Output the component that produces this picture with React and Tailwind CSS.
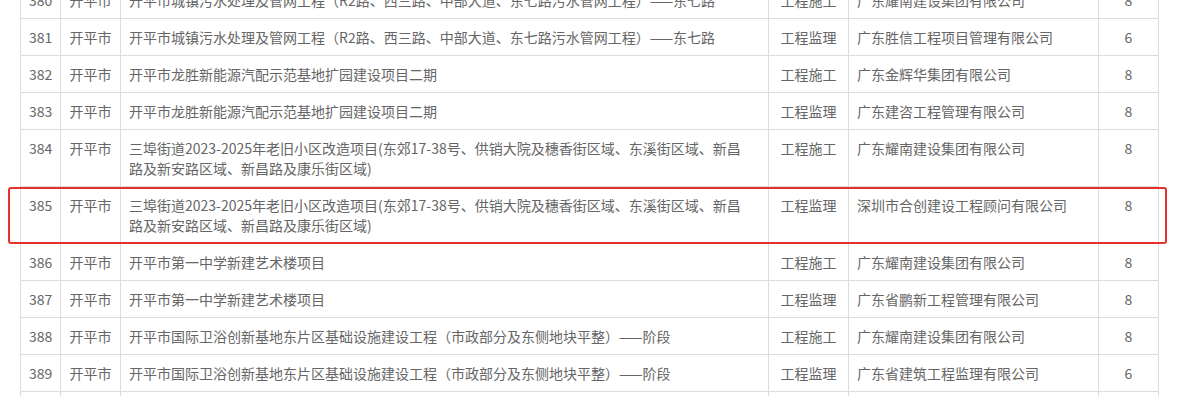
const rows = [
  {
    no: 380,
    city: "开平市",
    name: ["开平市城镇污水处理及管网工程（R2路、西三路、中部大道、东七路污水管网工程）——东七路"],
    type: "工程施工",
    company: "广东耀南建设集团有限公司",
    score: 8,
  },
  {
    no: 381,
    city: "开平市",
    name: ["开平市城镇污水处理及管网工程（R2路、西三路、中部大道、东七路污水管网工程）——东七路"],
    type: "工程监理",
    company: "广东胜信工程项目管理有限公司",
    score: 6,
  },
  {
    no: 382,
    city: "开平市",
    name: ["开平市龙胜新能源汽配示范基地扩园建设项目二期"],
    type: "工程施工",
    company: "广东金辉华集团有限公司",
    score: 8,
  },
  {
    no: 383,
    city: "开平市",
    name: ["开平市龙胜新能源汽配示范基地扩园建设项目二期"],
    type: "工程监理",
    company: "广东建咨工程管理有限公司",
    score: 8,
  },
  {
    no: 384,
    city: "开平市",
    name: [
      "三埠街道2023-2025年老旧小区改造项目(东郊17-38号、供销大院及穗香街区域、东溪街区域、新昌",
      "路及新安路区域、新昌路及康乐街区域)",
    ],
    type: "工程施工",
    company: "广东耀南建设集团有限公司",
    score: 8,
  },
  {
    no: 385,
    city: "开平市",
    name: [
      "三埠街道2023-2025年老旧小区改造项目(东郊17-38号、供销大院及穗香街区域、东溪街区域、新昌",
      "路及新安路区域、新昌路及康乐街区域)",
    ],
    type: "工程监理",
    company: "深圳市合创建设工程顾问有限公司",
    score: 8,
    marked: true,
  },
  {
    no: 386,
    city: "开平市",
    name: ["开平市第一中学新建艺术楼项目"],
    type: "工程施工",
    company: "广东耀南建设集团有限公司",
    score: 8,
  },
  {
    no: 387,
    city: "开平市",
    name: ["开平市第一中学新建艺术楼项目"],
    type: "工程监理",
    company: "广东省鹏新工程管理有限公司",
    score: 8,
  },
  {
    no: 388,
    city: "开平市",
    name: ["开平市国际卫浴创新基地东片区基础设施建设工程（市政部分及东侧地块平整）——阶段"],
    type: "工程施工",
    company: "广东耀南建设集团有限公司",
    score: 8,
  },
  {
    no: 389,
    city: "开平市",
    name: ["开平市国际卫浴创新基地东片区基础设施建设工程（市政部分及东侧地块平整）——阶段"],
    type: "工程监理",
    company: "广东省建筑工程监理有限公司",
    score: 6,
  },
  {
    no: 390,
    city: "开平市",
    name: ["开平市国际卫浴创新基地东片区基础设施建设工程（市政部分及东侧地块平整）——阶段"],
    type: "工程施工",
    company: "广东耀南建设集团有限公司",
    score: 8,
  },
];

const cell = "border-r border-[#dcdcdc] py-2 px-2 leading-5";

export default function App() {
  return (
    <div className="h-[396px] overflow-hidden bg-white font-['Microsoft_YaHei','Noto_Sans_CJK_SC',sans-serif] text-[14px] text-[#666]">
      <div className="ml-[20px] -mt-[18px] w-[1139px]">
        {rows.map((r) => (
          <div
            key={r.no}
            className="relative grid grid-cols-[40px_60px_648px_80px_250px_60px] border-l border-b border-[#dcdcdc]"
          >
            <div className={`${cell} px-0 text-center`}>{r.no}</div>
            <div className={`${cell} text-center`}>{r.city}</div>
            <div className={cell}>
              {r.name.map((line, i) => (
                <div key={i} className="whitespace-nowrap">
                  {line}
                </div>
              ))}
            </div>
            <div className={`${cell} text-center`}>{r.type}</div>
            <div className={cell}>{r.company}</div>
            <div className={`${cell} text-center`}>{r.score}</div>

            {r.marked && (
              <div className="pointer-events-none absolute -left-[13px] -right-[8px] top-0 -bottom-[1px] rounded-[3px] border-[2.5px] border-[#e4312b]" />
            )}
          </div>
        ))}
      </div>
    </div>
  );
}
